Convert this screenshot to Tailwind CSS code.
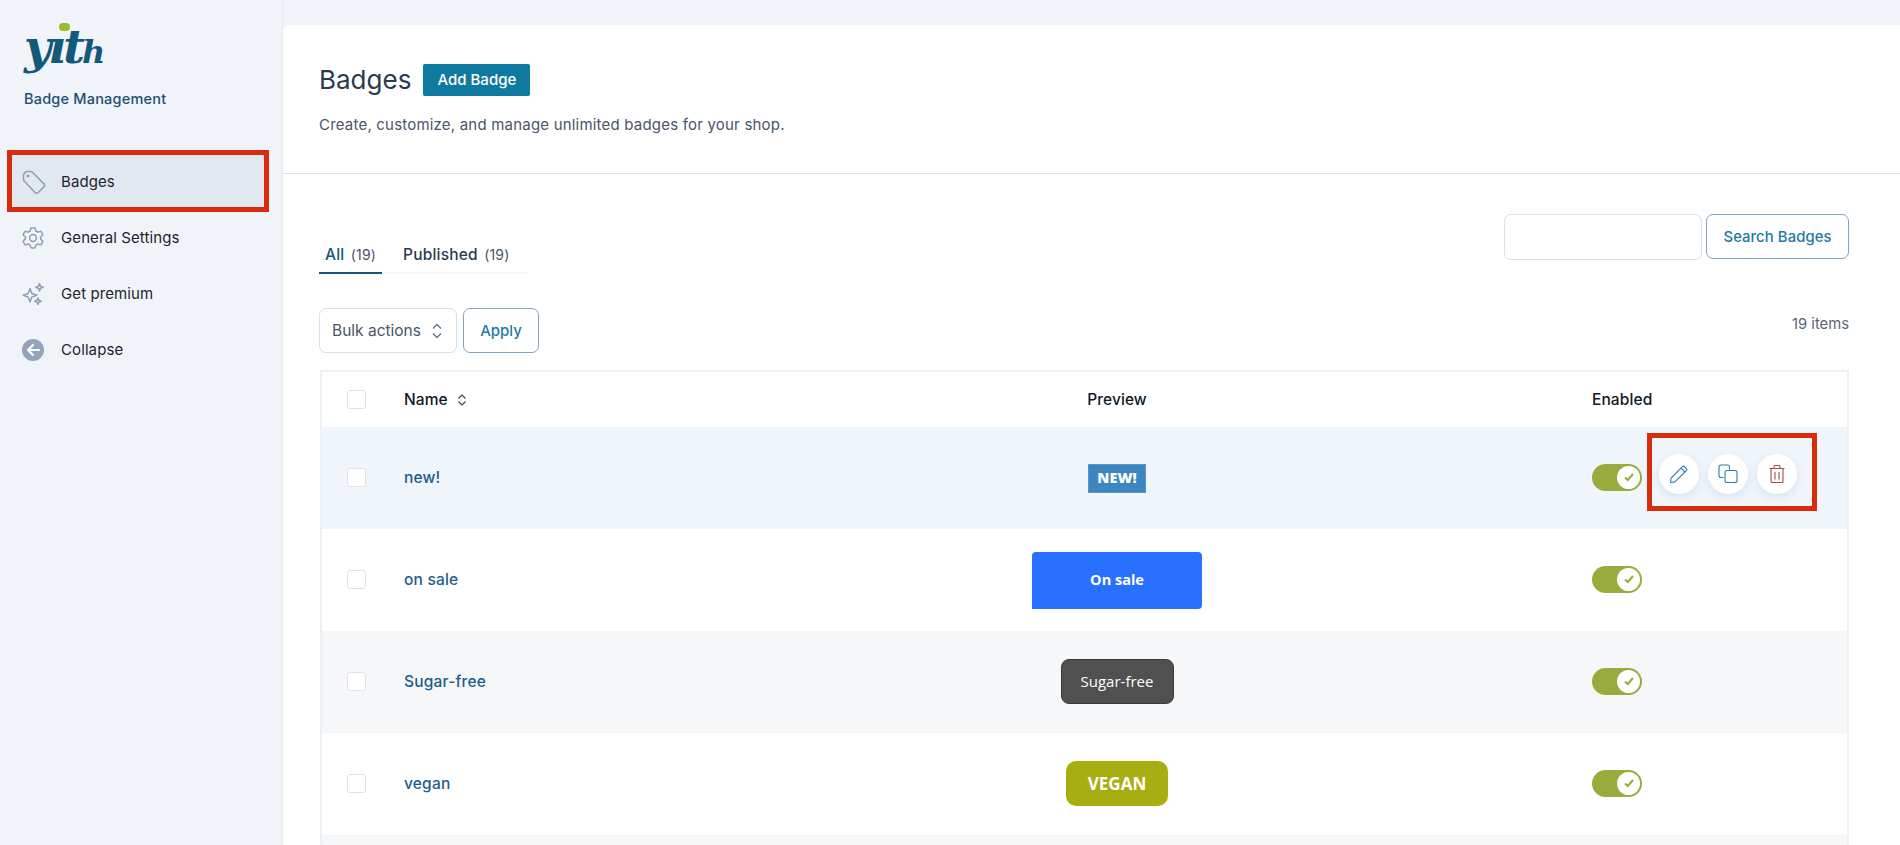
<!DOCTYPE html>
<html lang="en">
<head>
    <meta charset="UTF-8">
    <title>Badge Management</title>
    <script src="https://cdn.jsdelivr.net/npm/@tailwindcss/browser@4"></script>
</head>
<body class="bg-[#f0f4f9] font-['Inter',sans-serif] text-[15px] text-[#1c2430] h-[845px] overflow-hidden">
<div class="flex h-[845px]">
    <!-- Sidebar -->
    <aside class="w-[283px] shrink-0 border-r border-[#e6ebf1]">
        <div class="relative h-[76px] pl-[24px] pt-[25px]">
            <span class="relative block font-['DejaVu_Serif',serif] font-bold italic text-[47px] leading-[44px] tracking-[-3px] text-[#14597a]">yıt<span class="text-[32px] tracking-normal">h</span><span class="absolute left-[35px] top-[-2px] w-[11px] h-[8px] rounded-full bg-[#9cbc2c]"></span></span>
        </div>
        <p class="pl-[24px] mt-[13px] text-[#1d4f70] text-[14.5px] font-medium leading-[20px] tracking-[0.2px]">Badge Management</p>

        <nav class="mt-[45px] flex flex-col">
            <a class="relative h-[56px] flex items-center gap-[15px] ml-[12px] mr-[18px] pl-[10px] bg-[#e2e8f0] tracking-[0.1px]">
                <svg class="w-[24px] h-[24px]" viewBox="0 0 24 24" fill="none" stroke="#8f9eb3" stroke-width="1.5" stroke-linejoin="round"><path d="M1.5 5.5 a4 4 0 0 1 4-4 h3.2 a2.5 2.5 0 0 1 1.8.7 l11.5 11.7 a2 2 0 0 1 0 2.8 l-6 6 a2 2 0 0 1-2.8 0 L2.2 11 a2.5 2.5 0 0 1-.7-1.8z"/><circle cx="6" cy="6" r=".7"/></svg>
                <span>Badges</span>
                <span class="absolute left-[-5px] right-[-5px] top-[-4px] bottom-[-2px] border-[5px] border-[#d92c0d]"></span>
            </a>
            <a class="h-[56px] flex items-center gap-[16px] pl-[21px] tracking-[0.1px]">
                <svg class="w-[24px] h-[24px]" viewBox="0 0 24 24" fill="none" stroke="#8f9eb3" stroke-width="1.5" stroke-linejoin="round"><path d="M9.6 2.8a1 1 0 0 1 1-.8h2.8a1 1 0 0 1 1 .8l.4 2.2 2 1.2 2.2-.8a1 1 0 0 1 1.2.4l1.4 2.4a1 1 0 0 1-.2 1.3L19.6 11v2.2l1.8 1.4a1 1 0 0 1 .2 1.3l-1.4 2.4a1 1 0 0 1-1.2.4l-2.2-.8-2 1.2-.4 2.1a1 1 0 0 1-1 .8h-2.8a1 1 0 0 1-1-.8l-.4-2.1-2-1.2-2.2.8a1 1 0 0 1-1.2-.4l-1.4-2.4a1 1 0 0 1 .2-1.3L4.4 13v-2L2.6 9.5a1 1 0 0 1-.2-1.3l1.4-2.4A1 1 0 0 1 5 5.4l2.2.8 2-1.2z"/><circle cx="12" cy="12" r="3.4"/></svg>
                <span>General Settings</span>
            </a>
            <a class="h-[56px] flex items-center gap-[16px] pl-[21px] tracking-[0.1px]">
                <svg class="w-[24px] h-[24px]" viewBox="0 0 24 24" fill="none" stroke="#8f9eb3" stroke-width="1.5" stroke-linejoin="round"><path d="M9 6.500l1.800 5 5 1.800-5 1.800L9 20l-1.800-4.900-5-1.800 5-1.800z"/><path d="M18.500 1.500l1 2.700 2.700 1-2.700 1-1 2.700-1-2.700-2.700-1 2.700-1z"/><path d="M17 16l.9 2.300 2.300.9-2.300.9L17 22.500l-.9-2.400-2.300-.9 2.300-.9z"/></svg>
                <span>Get premium</span>
            </a>
            <a class="h-[56px] flex items-center gap-[16px] pl-[21px] tracking-[0.1px]">
                <svg class="w-[24px] h-[24px]" viewBox="0 0 24 24"><circle cx="12" cy="12" r="11" fill="#94a3b8"/><path d="M12 7l-5 5 5 5M7.500 12H18" fill="none" stroke="#fff" stroke-width="2.200" stroke-linecap="round" stroke-linejoin="round"/></svg>
                <span>Collapse</span>
            </a>
        </nav>
    </aside>

    <!-- Main panel -->
    <main class="flex-1 mt-[25px] bg-white rounded-tl-[8px]">
        <header class="h-[149px] border-b border-[#dfe3e8] pl-[36px] pt-[39px]">
            <div class="flex items-center gap-[12px] h-[31px]">
                <h1 class="text-[26px] leading-[31px] text-[#2a3a4f]">Badges</h1>
                <button class="h-[32px] w-[107px] pt-[2px] rounded-[2px] bg-[#0f7aa0] text-white text-[15px] font-medium">Add Badge</button>
            </div>
            <p class="mt-[20px] leading-[20px] text-[#4a5568] tracking-[0.2px]">Create, customize, and manage unlimited badges for your shop.</p>
        </header>

        <div class="pl-[36px] pr-[51px] pt-[40px]">
            <div class="flex justify-between h-[60px]">
                <div class="flex h-[34px] mt-[26px] border-b-2 border-[#f3f5f7] w-[209px]">
                    <a class="h-[34px] w-[63px] pl-[6px] border-b-2 border-[#14597a] text-[#14597a] font-medium leading-[30px] text-[15.5px] tracking-[0.2px]">All <span class="ml-[2px] text-[14px] font-normal text-[#4a5568]">(19)</span></a>
                    <a class="ml-[21px] font-medium leading-[30px] text-[#2a3a4f] text-[15.5px] tracking-[0.2px] whitespace-nowrap">Published <span class="ml-[2px] text-[14px] font-normal text-[#4a5568]">(19)</span></a>
                </div>
                <div class="flex gap-[4px] h-[46px]">
                    <input class="w-[198px] h-[46px] rounded-[7px] border border-[#d8e0e8] bg-white" type="text">
                    <button class="w-[143px] h-[45px] pt-[2px] rounded-[7px] border border-[#7fa5bf] text-[#1d7aa3] font-medium text-[14.8px] tracking-[0.1px]">Search Badges</button>
                </div>
            </div>

            <div class="flex items-start justify-between mt-[34px] h-[45px]">
                <div class="flex gap-[6px]">
                    <div class="w-[138px] h-[45px] rounded-[7px] border border-[#d8e0e8] flex items-center justify-between pl-[12px] pr-[13px] text-[#4a5568] text-[15.5px]">
                        <span>Bulk actions</span>
                        <svg class="w-[12px] h-[18px]" viewBox="0 0 12 18" fill="none" stroke="#64748b" stroke-width="1.300"><path d="M2 6.500L6 2.500l4 4M2 11.500l4 4 4-4"/></svg>
                    </div>
                    <button class="w-[76px] h-[45px] pt-[1px] rounded-[7px] border border-[#7fa5bf] text-[#1d7aa3] font-medium">Apply</button>
                </div>
                <span class="mt-[6px] text-[14.8px] leading-[20px] text-[#5b6675]">19 items</span>
            </div>

            <!-- Table -->
            <div class="mt-[17px] ml-px border-2 border-b-0 border-[#eef1f4]">
                <div class="grid grid-cols-[82px_480px_466px_1fr] items-center h-[55px] font-medium text-[#111827] text-[15.5px] tracking-[0.1px]">
                    <span class="pl-[25px]"><span class="block w-[19px] h-[19px] rounded-[3px] border border-[#dfe3e8] bg-white"></span></span>
                    <span class="flex items-center gap-[9px]">Name
                        <svg class="w-[10px] h-[14px]" viewBox="0 0 10 14" fill="none" stroke="#334155" stroke-width="1.100"><path d="M1.500 5.500L5 2l3.500 3.500M1.500 8.500L5 12l3.500-3.500"/></svg>
                    </span>
                    <span class="text-center">Preview</span>
                    <span class="pl-[242px]">Enabled</span>
                </div>

                <div class="relative grid grid-cols-[82px_480px_466px_1fr] items-center h-[102px] bg-[#eff5fa]">
                    <span class="pl-[25px] mb-[2px]"><span class="block w-[19px] h-[19px] rounded-[3px] border border-[#dfe3e8] bg-white"></span></span>
                    <a class="mb-[1px] font-medium text-[#1e5c8c] text-[15.5px] tracking-[0.2px]">new!</a>
                    <span class="flex justify-center"><span class="flex items-center justify-center w-[58px] h-[29px] bg-[#3c87c0] border border-[#5a97c6] font-['Open_Sans',sans-serif] font-extrabold text-[14.5px] text-white">NEW!</span></span>
                    <span class="pl-[242px] mb-[2px] flex items-center gap-[17px]">
                        <span class="flex items-center justify-end w-[50px] h-[27px] pr-[2px] rounded-full bg-[#98ab3c]"><span class="flex items-center justify-center w-[23px] h-[23px] rounded-full bg-white"><svg class="w-[12px] h-[12px]" viewBox="0 0 12 12" fill="none" stroke="#98ab3c" stroke-width="2"><path d="M2 6.500l2.800 2.500L10 3"/></svg></span></span>
                        <span class="flex gap-[9px] mb-[6px]">
                            <span class="flex items-center justify-center w-[40px] h-[40px] rounded-full bg-white shadow-[0_3px_8px_rgba(90,130,170,0.15)]"><svg class="w-[20px] h-[20px]" viewBox="0 0 20 20" fill="none" stroke="#2f7fae" stroke-width="1.100" stroke-linejoin="round"><path d="M1.500 18.500l.6-4.500L13.500 2.600a1.500 1.500 0 0 1 2.100 0l1.800 1.800a1.500 1.500 0 0 1 0 2.100L6 17.900z"/><path d="M12 4.100l3.900 3.900"/></svg></span>
                            <span class="flex items-center justify-center w-[40px] h-[40px] rounded-full bg-white shadow-[0_3px_8px_rgba(90,130,170,0.15)]"><svg class="w-[20px] h-[20px]" viewBox="0 0 20 20" fill="none" stroke="#2f7fae" stroke-width="1.100"><path d="M5.500 13.500H3a2 2 0 0 1-2-2V3a2 2 0 0 1 2-2h6.500a2 2 0 0 1 2 2v2.500"/><rect x="7" y="6.500" width="12" height="12" rx="2"/></svg></span>
                            <span class="flex items-center justify-center w-[40px] h-[40px] rounded-full bg-white shadow-[0_3px_8px_rgba(90,130,170,0.15)]"><svg class="w-[20px] h-[20px]" viewBox="0 0 20 20" fill="none" stroke="#a84a4a" stroke-width="1.100"><path d="M2.500 4.500h15M7 4.500V2.500a1 1 0 0 1 1-1h4a1 1 0 0 1 1 1v2M4 4.500v13a1 1 0 0 0 1 1h10a1 1 0 0 0 1-1v-13M8 8v7.500M12 8v7.500"/></svg></span>
                        </span>
                    </span>
                    <span class="absolute left-[1325px] top-[6px] w-[170px] h-[78px] border-[5px] border-[#d92c0d]"></span>
                </div>

                <div class="grid grid-cols-[82px_480px_466px_1fr] items-center h-[102px]">
                    <span class="pl-[25px] mb-[2px]"><span class="block w-[19px] h-[19px] rounded-[3px] border border-[#dfe3e8] bg-white"></span></span>
                    <a class="mb-[1px] font-medium text-[#1e5c8c] text-[15.5px] tracking-[0.2px]">on sale</a>
                    <span class="flex justify-center"><span class="flex items-center justify-center w-[170px] h-[57px] rounded-[4px] rounded-bl-none bg-[#2970ff] font-['Open_Sans',sans-serif] font-bold text-[14.5px] text-white">On sale</span></span>
                    <span class="pl-[242px] mb-[2px]"><span class="flex items-center justify-end w-[50px] h-[27px] pr-[2px] rounded-full bg-[#98ab3c]"><span class="flex items-center justify-center w-[23px] h-[23px] rounded-full bg-white"><svg class="w-[12px] h-[12px]" viewBox="0 0 12 12" fill="none" stroke="#98ab3c" stroke-width="2"><path d="M2 6.500l2.800 2.500L10 3"/></svg></span></span></span>
                </div>

                <div class="grid grid-cols-[82px_480px_466px_1fr] items-center h-[102px] bg-[#f5f7f8]">
                    <span class="pl-[25px] mb-[2px]"><span class="block w-[19px] h-[19px] rounded-[3px] border border-[#dfe3e8] bg-white"></span></span>
                    <a class="mb-[1px] font-medium text-[#1e5c8c] text-[15.5px] tracking-[0.2px]">Sugar-free</a>
                    <span class="flex justify-center"><span class="flex items-center justify-center w-[113px] h-[45px] mb-[1px] rounded-[8px] bg-[#505050] border border-[#3b3b3b] font-['Open_Sans',sans-serif] text-[15px] text-white">Sugar-free</span></span>
                    <span class="pl-[242px] mb-[2px]"><span class="flex items-center justify-end w-[50px] h-[27px] pr-[2px] rounded-full bg-[#98ab3c]"><span class="flex items-center justify-center w-[23px] h-[23px] rounded-full bg-white"><svg class="w-[12px] h-[12px]" viewBox="0 0 12 12" fill="none" stroke="#98ab3c" stroke-width="2"><path d="M2 6.500l2.800 2.500L10 3"/></svg></span></span></span>
                </div>

                <div class="grid grid-cols-[82px_480px_466px_1fr] items-center h-[102px]">
                    <span class="pl-[25px] mb-[2px]"><span class="block w-[19px] h-[19px] rounded-[3px] border border-[#dfe3e8] bg-white"></span></span>
                    <a class="mb-[1px] font-medium text-[#1e5c8c] text-[15.5px] tracking-[0.2px]">vegan</a>
                    <span class="flex justify-center"><span class="flex items-center justify-center w-[102px] h-[45px] mb-[1px] rounded-[10px] bg-[#a8ad12] font-['Open_Sans',sans-serif] font-bold text-[17px] text-white">VEGAN</span></span>
                    <span class="pl-[242px] mb-[2px]"><span class="flex items-center justify-end w-[50px] h-[27px] pr-[2px] rounded-full bg-[#98ab3c]"><span class="flex items-center justify-center w-[23px] h-[23px] rounded-full bg-white"><svg class="w-[12px] h-[12px]" viewBox="0 0 12 12" fill="none" stroke="#98ab3c" stroke-width="2"><path d="M2 6.500l2.800 2.500L10 3"/></svg></span></span></span>
                </div>

                <div class="h-[20px] bg-[#f5f7f8]"></div>
            </div>
        </div>
    </main>
</div>
</body>
</html>
